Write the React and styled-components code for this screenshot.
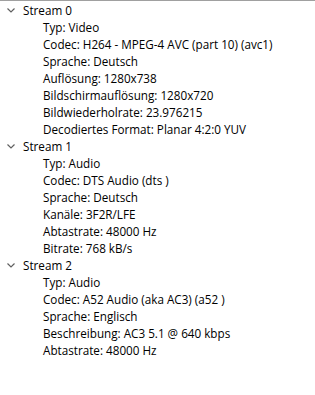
import styled, { createGlobalStyle } from "styled-components";

const GlobalStyle = createGlobalStyle`
  html, body {
    margin: 0;
    padding: 0;
    background: #fff;
  }
`;

const streams = [
  {
    name: "Stream 0",
    props: [
      "Typ: Video",
      "Codec: H264 - MPEG-4 AVC (part 10) (avc1)",
      "Sprache: Deutsch",
      "Auflösung: 1280x738",
      "Bildschirmauflösung: 1280x720",
      "Bildwiederholrate: 23.976215",
      "Decodiertes Format: Planar 4:2:0 YUV",
    ],
  },
  {
    name: "Stream 1",
    props: [
      "Typ: Audio",
      "Codec: DTS Audio (dts )",
      "Sprache: Deutsch",
      "Kanäle: 3F2R/LFE",
      "Abtastrate: 48000 Hz",
      "Bitrate: 768 kB/s",
    ],
  },
  {
    name: "Stream 2",
    props: [
      "Typ: Audio",
      "Codec: A52 Audio (aka AC3) (a52 )",
      "Sprache: Englisch",
      "Beschreibung: AC3 5.1 @ 640 kbps",
      "Abtastrate: 48000 Hz",
    ],
  },
];

function Chevron() {
  return (
    <svg width="8" height="5" viewBox="0 0 8 5">
      <path d="M0.5 0.5 L4 4 L7.5 0.5" fill="none" stroke="#606060" strokeWidth="1.2" />
    </svg>
  );
}

function App() {
  return (
    <>
      <GlobalStyle />
      <Tree>
        {streams.map((s) => (
          <Node key={s.name}>
            <NodeRow>
              <Toggle>
                <Chevron />
              </Toggle>
              <Label>{s.name}</Label>
            </NodeRow>
            {s.props.map((p) => (
              <LeafRow key={p}>
                <Label>{p}</Label>
              </LeafRow>
            ))}
          </Node>
        ))}
      </Tree>
    </>
  );
}

const Tree = styled.div`
  width: 315px;
  height: 395px;
  box-sizing: border-box;
  border-top: 1px solid #a0a0a0;
  padding-top: 1px;
  font-family: "Open Sans", "Noto Sans", sans-serif;
  font-size: 11.7px;
  color: #000;
  background: #fff;
`;
const Node = styled.div`
  display: flex;
  flex-direction: column;
`;
const NodeRow = styled.div`
  display: flex;
  align-items: center;
  height: 17px;
  padding-left: 6px;
`;
const Toggle = styled.span`
  display: flex;
  align-items: center;
  justify-content: center;
  width: 9px;
  margin-right: 8px;
`;
const LeafRow = styled.div`
  display: flex;
  align-items: center;
  height: 17px;
  padding-left: 43px;
`;
const Label = styled.span`
  white-space: nowrap;
  line-height: 17px;
`;

export default App;
